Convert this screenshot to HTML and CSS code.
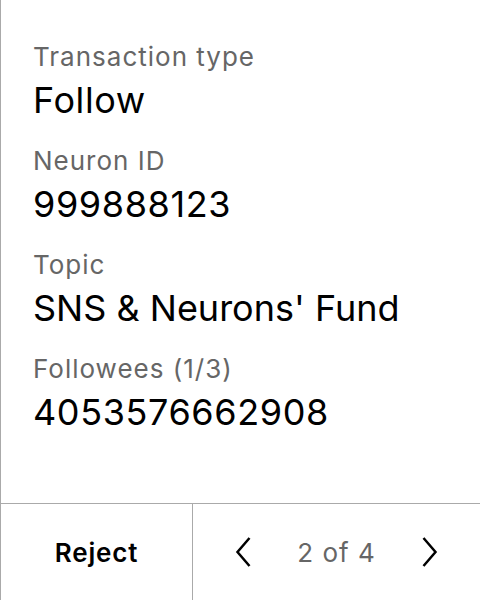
FILE: index.html
```html
<!DOCTYPE html>
<html>
<head>
<meta charset="utf-8">
<link rel="stylesheet" href="styles.css">
</head>
<body>
<div class="screen">
  <div class="content">
    <div class="field">
      <div class="label">Transaction type</div>
      <div class="value">Follow</div>
    </div>
    <div class="field">
      <div class="label">Neuron ID</div>
      <div class="value">999888123</div>
    </div>
    <div class="field">
      <div class="label">Topic</div>
      <div class="value value--tight">SNS &amp; Neurons' Fund</div>
    </div>
    <div class="field">
      <div class="label">Followees (1/3)</div>
      <div class="value">4053576662908</div>
    </div>
  </div>
  <div class="footer">
    <div class="reject">Reject</div>
    <div class="pager">
      <svg class="chev" width="20" height="32" viewBox="0 0 20 32"><path d="M16.5 2 L4.5 16 L16.5 30" fill="none" stroke="#000" stroke-width="2.5"/></svg>
      <span class="count">2 of 4</span>
      <svg class="chev" width="20" height="32" viewBox="0 0 20 32"><path d="M3.5 2 L15.5 16 L3.5 30" fill="none" stroke="#000" stroke-width="2.5"/></svg>
    </div>
  </div>
</div>
</body>
</html>
```
FILE: styles.css
```css
html, body {
  margin: 0;
  padding: 0;
  background: #fff;
}
.screen {
  width: 480px;
  height: 600px;
  box-sizing: border-box;
  border-left: 1px solid #aaa;
  display: flex;
  flex-direction: column;
  font-family: Inter, "Noto Sans", sans-serif;
}
.content {
  flex: 1;
  padding: 40px 0 0 32px;
  display: flex;
  flex-direction: column;
}
.field {
  height: 104px;
}
.label {
  font-size: 26px;
  line-height: 34px;
  letter-spacing: 1px;
  color: #666;
}
.value {
  font-size: 36px;
  line-height: 52px;
  letter-spacing: 0.6px;
  color: #000;
}
.value--tight {
  letter-spacing: 0;
}
.footer {
  height: 96px;
  border-top: 1px solid #aaa;
  display: flex;
}
.reject {
  width: 191px;
  border-right: 1px solid #aaa;
  display: flex;
  align-items: center;
  justify-content: center;
  font-size: 26px;
  font-weight: 600;
  letter-spacing: 0.8px;
  color: #000;
}
.pager {
  flex: 1;
  display: flex;
  align-items: center;
  justify-content: space-between;
  padding: 0 40px;
}
.count {
  font-size: 26px;
  letter-spacing: 1px;
  color: #666;
}
```
